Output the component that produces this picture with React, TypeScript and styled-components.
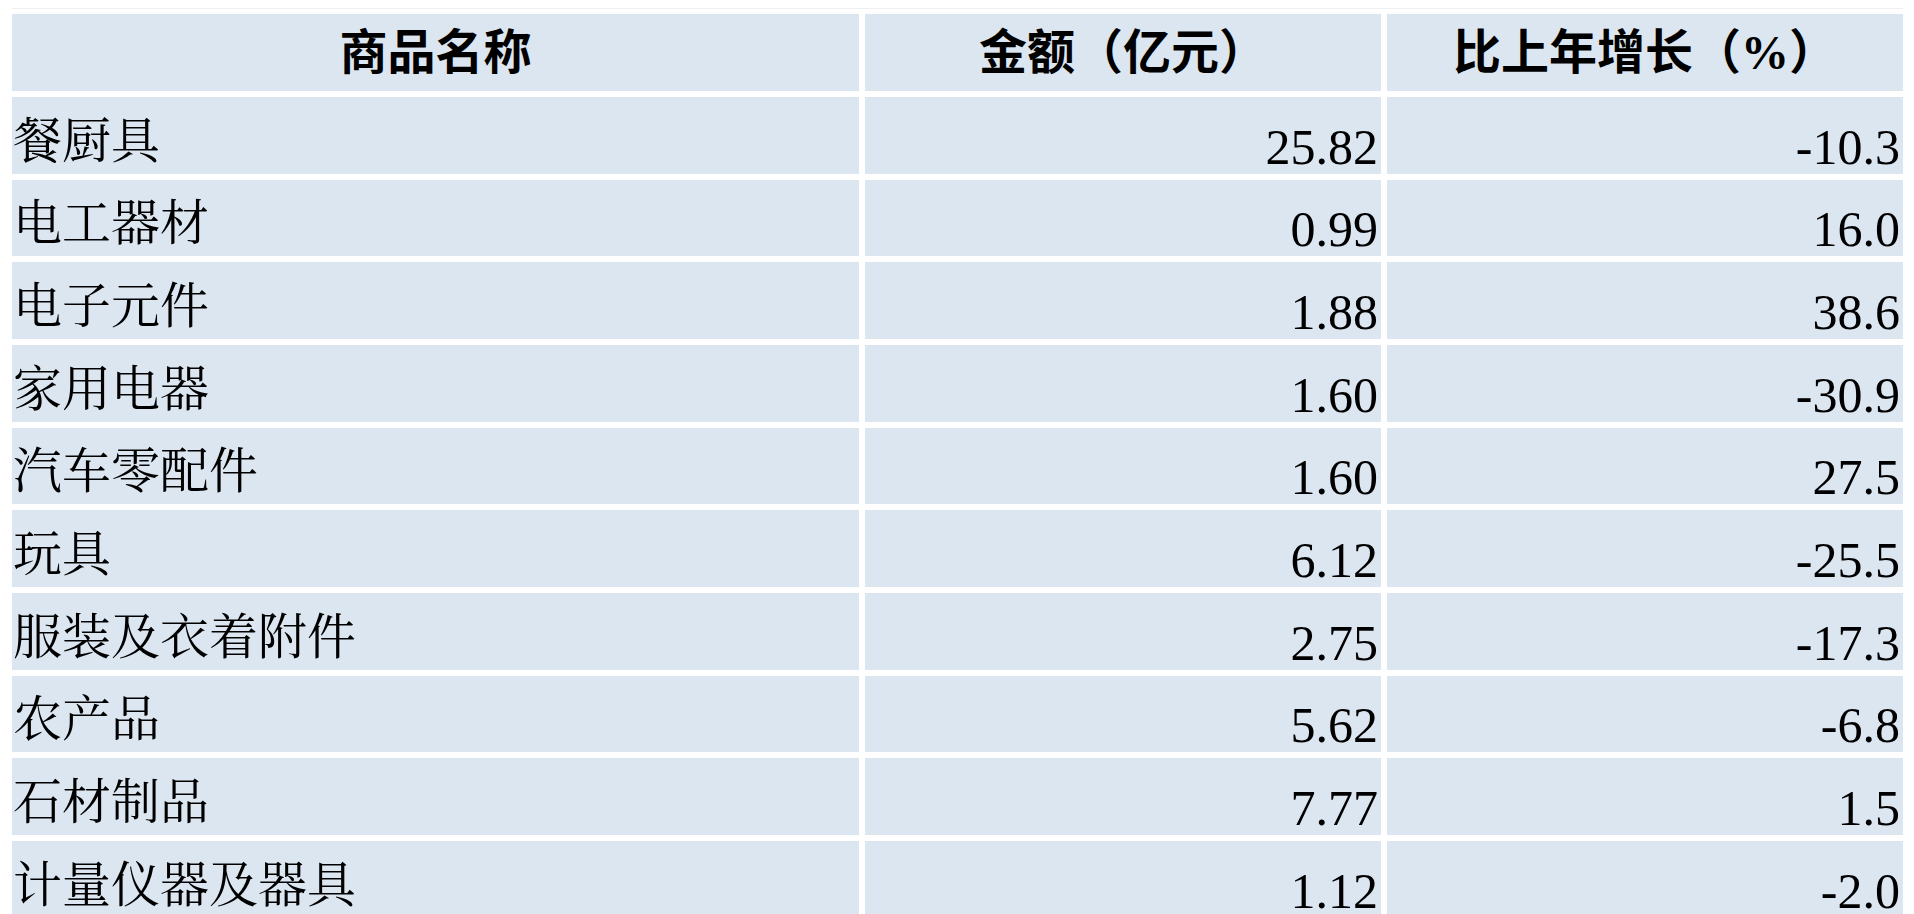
import React from "react";
import styled, { createGlobalStyle } from "styled-components";

const GlobalStyle = createGlobalStyle`
  html, body {
    margin: 0;
    padding: 0;
    overflow: hidden;
    background: #fff;
  }
`;

const Page = styled.div`
  width: 1914px;
  height: 914px;
  box-sizing: border-box;
  padding: 8px 11px 0 12px;
  overflow: hidden;
  background: #fff;
`;

const TopRule = styled.div`
  height: 1px;
  margin-bottom: 5px;
  background: #efefef;
`;

const Table = styled.div`
  display: grid;
  grid-template-columns: 847px 516px 516px;
  grid-template-rows: 77px;
  grid-auto-rows: 76.67px;
  gap: 6px;
`;

const cellBase = `
  display: flex;
  box-sizing: border-box;
  align-items: flex-end;
  min-width: 0;
  background: #dce6f1;
  color: #000;
  line-height: 1;
  white-space: nowrap;
`;

const HeadCell = styled.div`
  ${cellBase}
  justify-content: center;
  padding-bottom: 14px;
  font-family: "Liberation Serif", "Noto Sans CJK SC", serif;
  font-size: 48px;
  font-weight: 700;
`;

const NameCell = styled.div`
  ${cellBase}
  justify-content: flex-start;
  padding: 0 0 12px 1px;
  font-family: "Noto Serif CJK SC", "Noto Sans CJK SC", serif;
  font-size: 49px;
  font-weight: 400;
`;

const ValueCell = styled.div`
  ${cellBase}
  justify-content: flex-end;
  padding: 0 3px 2px 0;
  font-family: "Liberation Serif", "Times New Roman", serif;
  font-size: 50px;
  font-weight: 400;
`;

interface Row {
  name: string;
  amount: string;
  growth: string;
}

const rows: Row[] = [
  { name: "餐厨具", amount: "25.82", growth: "-10.3" },
  { name: "电工器材", amount: "0.99", growth: "16.0" },
  { name: "电子元件", amount: "1.88", growth: "38.6" },
  { name: "家用电器", amount: "1.60", growth: "-30.9" },
  { name: "汽车零配件", amount: "1.60", growth: "27.5" },
  { name: "玩具", amount: "6.12", growth: "-25.5" },
  { name: "服装及衣着附件", amount: "2.75", growth: "-17.3" },
  { name: "农产品", amount: "5.62", growth: "-6.8" },
  { name: "石材制品", amount: "7.77", growth: "1.5" },
  { name: "计量仪器及器具", amount: "1.12", growth: "-2.0" },
];

export default function App() {
  return (
    <>
      <GlobalStyle />
      <Page>
        <TopRule />
        <Table>
          <HeadCell>商品名称</HeadCell>
          <HeadCell>金额（亿元）</HeadCell>
          <HeadCell>比上年增长（%）</HeadCell>
          {rows.map((row) => (
            <React.Fragment key={row.name}>
              <NameCell>{row.name}</NameCell>
              <ValueCell>{row.amount}</ValueCell>
              <ValueCell>{row.growth}</ValueCell>
            </React.Fragment>
          ))}
        </Table>
      </Page>
    </>
  );
}
